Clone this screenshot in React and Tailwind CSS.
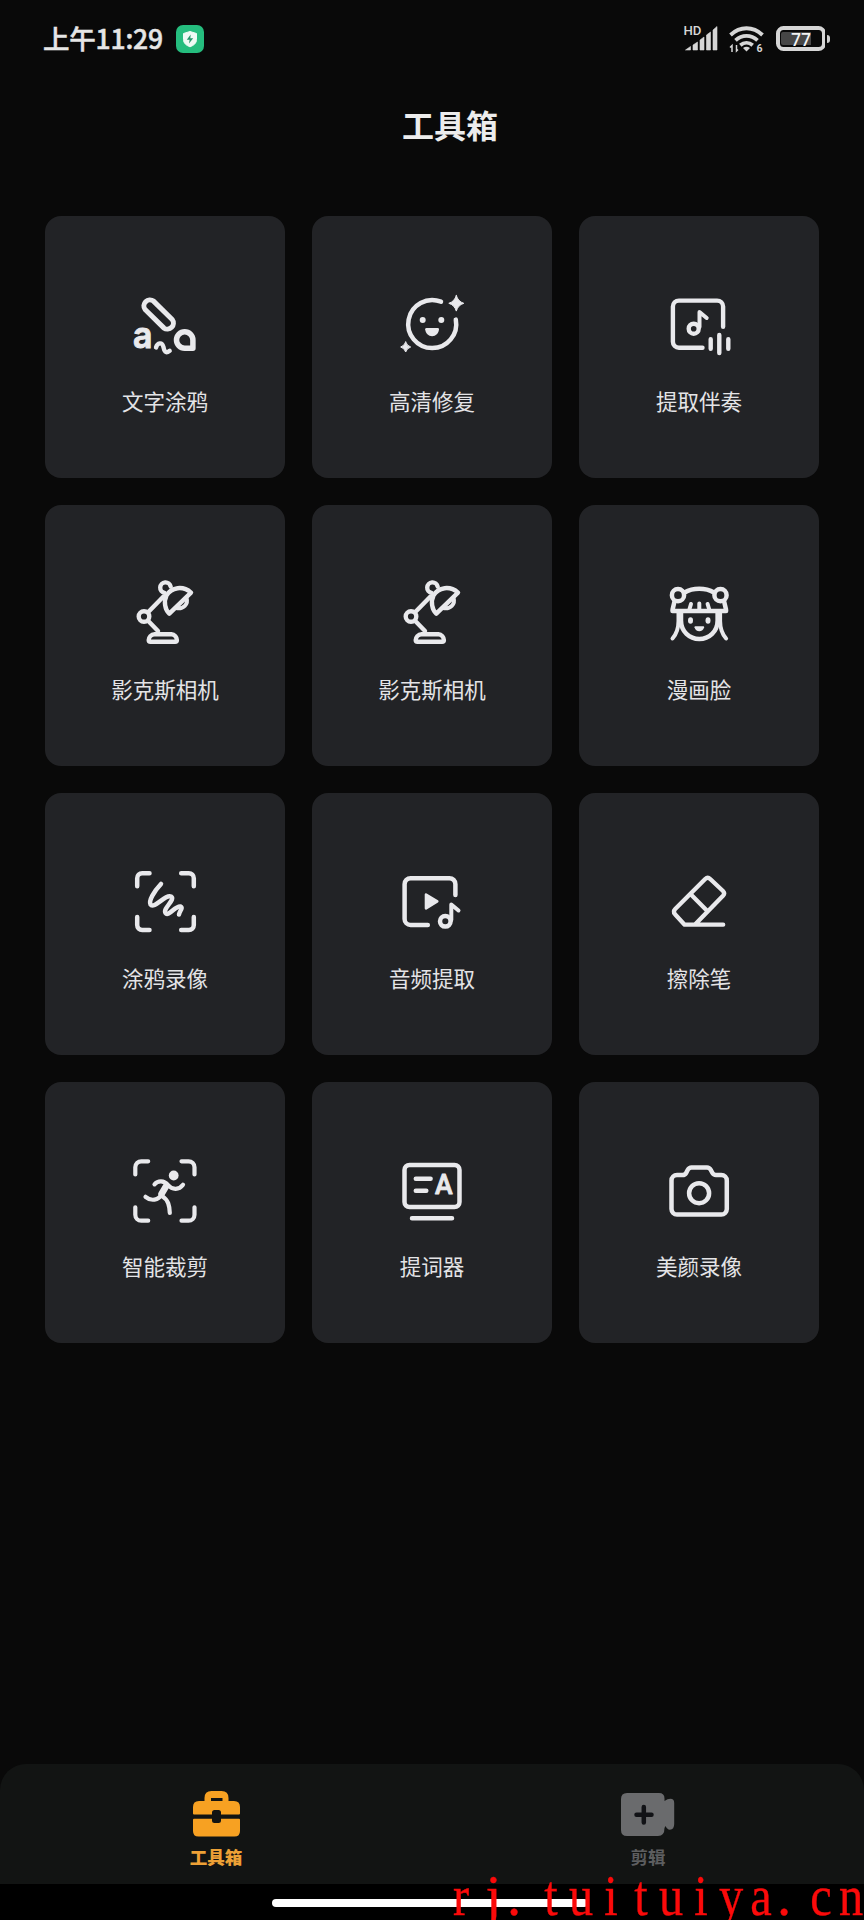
const INK = "#e9e9ec";

function Icon({ children, w = 4.5 }) {
  return (
    <svg
      className="block h-20 w-20 shrink-0"
      viewBox="0 0 80 80"
      fill="none"
      stroke={INK}
      strokeWidth={w}
      strokeLinecap="round"
      strokeLinejoin="round"
    >
      {children}
    </svg>
  );
}

const solid = { fill: INK, stroke: "none" };

function Doodle() {
  return (
    <Icon w={5}>
      <path d="M28.5 16.1L47.2 34.5A6 6 0 0 1 38.8 42.9L20.1 24.5A6 6 0 0 1 28.5 16.1Z" />
      <text
        x="8"
        y="63.2"
        textLength="19.5"
        lengthAdjust="spacingAndGlyphs"
        className="font-['Inter'] text-[37px] font-semibold"
        fill={INK}
        strokeWidth="1"
      >
        a
      </text>
      <path d="M31 62.5C32.500 57.500 37 57 38.300 61.500C39.300 66.500 40.500 69 44.700 65.800" strokeWidth="4.400" />
      <path d="M59.7 46.8A8.2 8.2 0 1 0 59.7 63.2H67.9V55A8.2 8.2 0 0 0 59.7 46.8Z" strokeWidth="5.5" />
    </Icon>
  );
}

function Smile() {
  return (
    <Icon>
      <path d="M49 16.7A24 24 0 1 0 63.8 34.6" />
      <circle cx="30.7" cy="35" r="3" {...solid} />
      <circle cx="49.3" cy="35" r="3" {...solid} />
      <path d="M34.5 43h11.2q1.3 0 1.3 1.3c-.3 4-3.2 6.9-6.9 6.9s-6.600-2.900-6.900-6.900q0-1.300 1.300-1.300z" {...solid} />
      <path d="M64.300 10.500q1.700 6 7.500 7.800q-5.800 1.800-7.500 7.800q-1.700-6-7.500-7.800q5.800-1.800 7.500-7.800z" fill={INK} strokeWidth="1" />
      <path d="M13.700 57q1.200 3.800 5 5q-3.800 1.200-5 5q-1.200-3.800-5-5q3.800-1.200 5-5z" fill={INK} strokeWidth="1" />
    </Icon>
  );
}

function Accompaniment() {
  return (
    <Icon w={4.4}>
      <path d="M43.500 62.700H19.900a6 6 0 0 1-6-6V21.600a6 6 0 0 1 6-6H58.100a6 6 0 0 1 6 6V41.800" />
      <circle cx="34.700" cy="43.700" r="5" />
      <path d="M40.500 42V27L47.700 33" strokeWidth="4" />
      <path d="M51.700 54.300V63.700M60.300 49.900V68M69.300 54.300V63.700" />
    </Icon>
  );
}

function Lamp() {
  return (
    <Icon w={4.4}>
      <path d="M39.500 18.900A5.300 5.300 0 1 1 45.700 12.600" />
      <path d="M66 18.600C58 11.500 46.500 13 41.500 21.500C38.500 27.500 40 35.500 44.300 39.700Z" />
      <path d="M61.500 23.800C63.500 30 58.500 35.500 51 34" strokeWidth="4" />
      <circle cx="19" cy="42.500" r="5.300" />
      <path d="M23.300 38L38.500 22.500M23.300 47L33 57" />
      <path d="M29.500 60.200H46.500c3 0 5.400 3.200 5.400 5.800 0 1.200-.7 1.800-1.800 1.800H25.500c-1.100 0-1.800-.6-1.800-1.800 0-2.600 2.400-5.800 5.800-5.800z" />
    </Icon>
  );
}

function Comic() {
  return (
    <Icon w={4.500}>
      <circle cx="19" cy="21.200" r="6.100" />
      <circle cx="61.500" cy="21.200" r="6.100" />
      <path d="M25.500 18.500C34 13.500 46.500 13.500 55 18.500" />
      <path d="M15.300 28C14.800 31.500 13.500 34 13.500 37H67.100C67.100 34 65.800 31.500 65.300 28" />
      <path d="M32 30L30.500 35M40.300 29.500V35M48.600 30L50.100 35" strokeWidth="4" />
      <path d="M22 38V46.500C22 57.500 30.500 65 40.300 65C50.100 65 58.600 57.500 58.600 46.500V38" />
      <path d="M19.500 39V47C19.500 55 17 60.500 13.500 64.500M61.100 39V47C61.100 55 63.600 60.500 67.100 64.500" strokeWidth="4" />
      <ellipse cx="31.500" cy="46.500" rx="2.500" ry="3.200" {...solid} />
      <ellipse cx="49" cy="46.500" rx="2.500" ry="3.200" {...solid} />
      <path d="M36.300 52.200h8q1 0 .8 1c-.6 2.600-2.500 4-4.800 4s-4.200-1.400-4.800-4q-.2-1 .8-1z" {...solid} />
    </Icon>
  );
}

function ScanDoodle() {
  return (
    <Icon>
      <path d="M24.500 11.200H17.200a5 5 0 0 0-5 5V24.200M56.200 11.200H63.800a5 5 0 0 1 5 5V24.200M12.200 55V63.100a5 5 0 0 0 5 5H24.500M68.800 55V63.100a5 5 0 0 1-5 5H56.200" />
      <path d="M36 22C29 29.500 23.500 38.500 25.500 42.500C29 47.500 40.500 32 46 34.500C51 37.500 37.500 46.500 40.500 51C43.500 55.500 50.500 43 55.500 44.500C58.500 46 54.500 49 54 52.500" />
    </Icon>
  );
}

function AudioExtract() {
  return (
    <Icon>
      <path d="M35.800 62.900H18.600a6 6 0 0 1-6-6V22.200a6 6 0 0 1 6-6H57.400a6 6 0 0 1 6 6V33" />
      <path d="M34 32.600L45.300 39.400L34 46.300Z" fill={INK} strokeWidth="2.600" />
      <circle cx="53.300" cy="59.300" r="5.300" />
      <path d="M59.300 58V42.500L66.500 48.500" strokeWidth="4" />
    </Icon>
  );
}

function Eraser() {
  return (
    <Icon w={4.300}>
      <path d="M64.200 62.700H25.600L16 52.200Q13.700 49.500 16.200 47L46.200 17Q48.700 14.600 51.200 17L64 29Q66.300 31.300 64 33.800L36.500 62" />
      <path d="M31.700 32.300L48.300 49" />
    </Icon>
  );
}

function ScanRunner() {
  return (
    <Icon w={4.200}>
      <path d="M23.200 10.300H16.300a6 6 0 0 0-6 6V23.400M56.500 10.300H63.500a6 6 0 0 1 6 6V23.400M10.300 56.300V63.700a6 6 0 0 0 6 6H23.200M69.500 56.300V63.700a6 6 0 0 1-6 6H56.500" />
      <circle cx="48.700" cy="24.500" r="4.900" {...solid} />
      <path d="M29.500 33.300C33 29.300 39 29.300 43 34C47.500 39.300 54 39 58 33.700" />
      <path d="M41.500 34.500L36.500 43" strokeWidth="6.500" />
      <path d="M20.500 45.800C26 50.500 33.500 49.500 37 43" />
      <path d="M37 45C43.500 49 44.500 55 44.800 62" />
    </Icon>
  );
}

function Prompter() {
  return (
    <Icon>
      <rect x="12.500" y="14" width="55" height="42" rx="5" />
      <path d="M23.800 27.800H38.600M23.800 39.700H34.300M20 67.300H60" />
      <text
        x="43"
        y="43.300"
        textLength="17.600"
        lengthAdjust="spacingAndGlyphs"
        className="font-['Roboto'] text-[28px] font-medium"
        fill={INK}
        stroke={INK}
        strokeWidth="0.900"
      >
        A
      </text>
    </Icon>
  );
}

function Camera() {
  return (
    <Icon>
      <path d="M18 24H23.500Q26 24 27.200 21.800L28.800 18.800Q30.100 16.400 32.500 16.400H48Q50.400 16.400 51.700 18.800L53.300 21.800Q54.500 24 57 24H62.300a5.500 5.500 0 0 1 5.500 5.500V58.100a5.500 5.500 0 0 1-5.500 5.500H18a5.500 5.500 0 0 1-5.500-5.500V29.500A5.500 5.500 0 0 1 18 24Z" />
      <circle cx="40.100" cy="42.200" r="10" />
    </Icon>
  );
}

const tools = [
  ["文字涂鸦", Doodle],
  ["高清修复", Smile],
  ["提取伴奏", Accompaniment],
  ["影克斯相机", Lamp],
  ["影克斯相机", Lamp],
  ["漫画脸", Comic],
  ["涂鸦录像", ScanDoodle],
  ["音频提取", AudioExtract],
  ["擦除笔", Eraser],
  ["智能裁剪", ScanRunner],
  ["提词器", Prompter],
  ["美颜录像", Camera],
];

function StatusBar() {
  return (
    <header className="flex h-[78px] items-center pl-[43px] pr-[34px] text-[#e6e6e6]">
      <span className="pb-px text-[26.5px] leading-none font-medium tracking-[-0.2px] [-webkit-text-stroke:0.5px_#e6e6e6]">上午11:29</span>
      <svg className="ml-[13px] h-[28px] w-[28px]" viewBox="0 0 28 28">
        <rect width="28" height="28" rx="7" fill="#25bd7e" />
        <path d="M14 6.500L20.500 8.500V14.500C20.500 18 18 20.300 14 21.800C10 20.300 7.500 18 7.500 14.500V8.500Z" fill="#eefaf4" stroke="#eefaf4" strokeWidth="1" strokeLinejoin="round" />
        <path d="M14.700 9.500L10.800 14.700H13.600L13 18.500L17.200 13.200H14.300Z" fill="#25966a" />
      </svg>
      <svg className="ml-auto h-[30px] w-[142px]" viewBox="683 24 142 30" fill="#d6d6d6">
        <text x="683.500" y="34.500" className="font-['Roboto'] text-[12.500px] font-medium" textLength="18" lengthAdjust="spacingAndGlyphs">
          HD
        </text>
        <path d="M685.500 50L690.500 46.500V50ZM693 45L697.500 42V50H693ZM700 40L704 37V50H700ZM706.500 35L710.500 32V50H706.500ZM713 30L717 26.500V50H713Z" stroke="#d6d6d6" strokeWidth=".6" />
        <g fill="none" stroke="#d6d6d6" strokeWidth="3.800">
          <path d="M730.500 35C740 26 753 26 762.500 35" />
          <path d="M735.500 40.300C742 34.300 751 34.300 757.500 40.300" />
          <path d="M740.300 45.200C744 42 749 42 752.700 45.200" />
          <path d="M730 47.500L732 45.500V52M736.500 45V51L738 49.500" strokeWidth="1.500" />
        </g>
        <path d="M743 48Q746.500 45.500 750 48L746.500 51.500Z" />
        <text x="756.500" y="52.300" className="font-['Roboto'] text-[10.500px] font-bold">6</text>
        <rect x="778" y="28" width="46" height="21" rx="5.500" fill="none" stroke="#d6d6d6" strokeWidth="4" />
        <path d="M783 32H811V45H783Q781 45 781 43V34Q781 32 783 32Z" fill="#464646" />
        <text x="791" y="45.500" fill="#f3f3f3" className="font-['Noto_Sans'] text-[18px] font-medium" textLength="20" lengthAdjust="spacingAndGlyphs">
          77
        </text>
      </svg>
      <span className="ml-[2px] h-[8px] w-[3px] rounded-r-sm bg-[#cfcfcf]" />
    </header>
  );
}

function Toolbox() {
  return (
    <svg className="h-[46px] w-[47px]" viewBox="0 0 47 46" fill="#f7a122">
      <path fillRule="evenodd" d="M11.500 10V7Q11.500 0 18.500 0H28.500Q35.500 0 35.500 7V10H41Q47 10 47 16V22.500Q47 23.500 46 23.500H28V21.500Q28 19 25.500 19H21.500Q19 19 19 21.500V23.500H1Q0 23.500 0 22.500V16Q0 10 6 10ZM18 7V10H29.500V7Z" />
      <path d="M1 27.700H19V29.500Q19 32 21.500 32H25.500Q28 32 28 29.500V27.700H46Q47 27.700 47 28.700V40Q47 45.500 41.500 45.500H5.500Q0 45.500 0 40V28.700Q0 27.700 1 27.700Z" />
    </svg>
  );
}

function VideoPlus() {
  return (
    <svg className="h-[46px] w-[54px]" viewBox="0 0 54 46">
      <path
        d="M6 2H38Q43.500 2 43.500 7.500V10L46.500 8.300Q53.200 6.500 53.200 12V33Q53.200 39.500 47.500 38.500Q45.500 37.500 44.500 35L43.500 37Q43.500 45 37 45H6Q0 45 0 39V8Q0 2 6 2Z"
        fill="#6a6b6d"
      />
      <path d="M22.800 16V31.500M15.500 23.700H30.500" stroke="#111216" strokeWidth="4.500" strokeLinecap="round" />
    </svg>
  );
}

export default function App() {
  return (
    <div className="relative flex h-[1920px] w-[864px] flex-col overflow-hidden bg-[#090909] font-['Noto_Sans_CJK_SC',sans-serif]">
      <StatusBar />
      <h1 className="flex h-[138px] items-start justify-center pt-[30px] pl-[36px] text-[32px] leading-[32px] font-bold text-[#ececec]">
        工具箱
      </h1>
      <main className="grid grid-cols-3 gap-[27px] px-[45px]">
        {tools.map(([name, Glyph], i) => (
          <section key={i} className="flex h-[261.5px] flex-col items-center rounded-[16px] bg-[#222326] pt-[69px]">
            <Glyph />
            <span className="mt-[19.5px] text-[21.500px] leading-[32px] text-[#e4e4e6]">{name}</span>
          </section>
        ))}
      </main>
      <nav className="mt-auto grid h-[120px] grid-cols-2 rounded-t-[26px] bg-[#121413]">
        <div className="flex flex-col items-center pt-[27px]">
          <Toolbox />
          <span className="mt-[8px] text-[17.500px] leading-[24px] font-black text-[#eda136]">工具箱</span>
        </div>
        <div className="flex flex-col items-center pt-[27px]">
          <VideoPlus />
          <span className="mt-[8px] text-[17.500px] leading-[24px] font-bold text-[#5d5e60]">剪辑</span>
        </div>
      </nav>
      <footer className="h-[36px] bg-black pt-[15px] pl-[272px]">
        <div className="h-[8px] w-[316px] rounded-full bg-white" />
      </footer>
      <div className="absolute top-[1872px] left-[446px] flex font-['Liberation_Serif',serif] text-[57px] leading-[48px] text-[#fb0a0a] [-webkit-text-stroke:0.4px_#fb0a0a]">
        {[..."rj.tuituiya.cn"].map((c, i) => (
          <span
            key={i}
            className={
              c === "."
                ? "flex h-[48px] w-[30px] pl-px"
                : c === "j"
                  ? "flex h-[48px] w-[30px] justify-center pl-[5px]"
                  : "flex h-[48px] w-[30px] scale-x-[0.85] justify-center"
            }
          >
            {c}
          </span>
        ))}
      </div>
    </div>
  );
}
